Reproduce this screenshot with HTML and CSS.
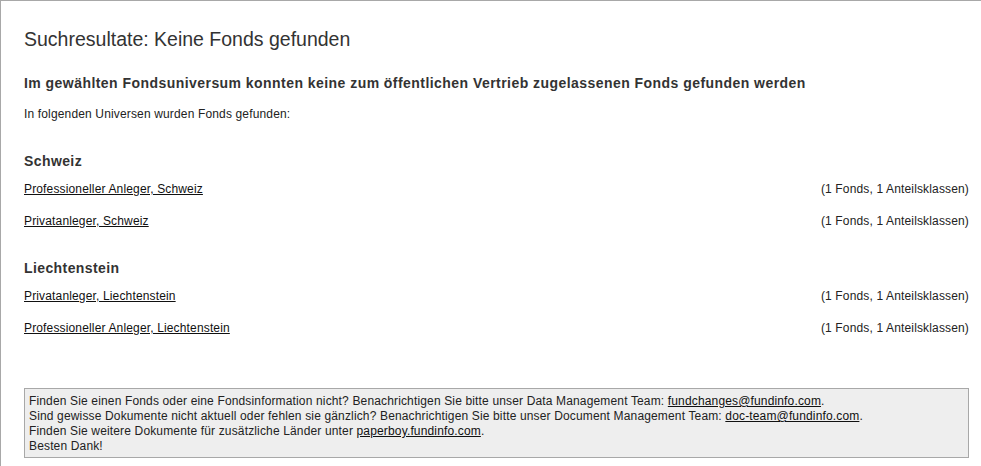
FILE: index.html
```html
<!DOCTYPE html>
<html lang="de">
<head>
  <meta charset="UTF-8">
  <title>Suchresultate</title>
  <link rel="stylesheet" href="styles.css">
</head>
<body>
  <div class="page">
    <h1 class="title">Suchresultate: Keine Fonds gefunden</h1>
    <h2 class="notice">Im gewählten Fondsuniversum konnten keine zum öffentlichen Vertrieb zugelassenen Fonds gefunden werden</h2>
    <p class="intro">In folgenden Universen wurden Fonds gefunden:</p>

    <div class="country">
      <h3>Schweiz</h3>
      <div class="row">
        <a href="#">Professioneller Anleger, Schweiz</a>
        <span>(1 Fonds, 1 Anteilsklassen)</span>
      </div>
      <div class="row">
        <a href="#">Privatanleger, Schweiz</a>
        <span>(1 Fonds, 1 Anteilsklassen)</span>
      </div>
    </div>

    <div class="country">
      <h3>Liechtenstein</h3>
      <div class="row">
        <a href="#">Privatanleger, Liechtenstein</a>
        <span>(1 Fonds, 1 Anteilsklassen)</span>
      </div>
      <div class="row">
        <a href="#">Professioneller Anleger, Liechtenstein</a>
        <span>(1 Fonds, 1 Anteilsklassen)</span>
      </div>
    </div>

    <div class="info">
      Finden Sie einen Fonds oder eine Fondsinformation nicht? Benachrichtigen Sie bitte unser Data Management Team: <a href="#">fundchanges@fundinfo.com</a>.<br>
      Sind gewisse Dokumente nicht aktuell oder fehlen sie gänzlich? Benachrichtigen Sie bitte unser Document Management Team: <a href="#">doc-team@fundinfo.com</a>.<br>
      Finden Sie weitere Dokumente für zusätzliche Länder unter <a href="#">paperboy.fundinfo.com</a>.<br>
      Besten Dank!
    </div>
  </div>
</body>
</html>
```

FILE: styles.css
```css
body {
  margin: 0;
  font-family: Arial, "Liberation Sans", sans-serif;
  font-size: 12px;
  letter-spacing: 0.15px;
  color: #222;
  background: #fff;
}

.page {
  border-top: 1px solid #a8a8a8;
  border-left: 1px solid #a8a8a8;
  padding: 27px 12px 8px 23px;
  min-height: 420px;
}

a {
  color: #111;
  text-decoration: underline;
}

.title {
  margin: 0;
  font-size: 19.5px;
  font-weight: normal;
  letter-spacing: 0;
  line-height: 23px;
  color: #333;
}

.notice {
  margin: 24px 0 0;
  font-size: 14px;
  letter-spacing: 0.45px;
  line-height: 17px;
  color: #333;
}

.intro {
  margin: 15px 0 0;
  line-height: 14px;
}

.country {
  margin-top: 32px;
}

.country h3 {
  margin: 0;
  font-size: 14px;
  letter-spacing: 0.4px;
  line-height: 17px;
  color: #333;
}

.row {
  display: flex;
  justify-content: space-between;
  line-height: 14px;
  margin-top: 18px;
}

.country h3 + .row {
  margin-top: 12px;
}

.info {
  margin-top: 53px;
  background: #eee;
  border: 1px solid #a8a8a8;
  padding: 5px 5px 3px 4px;
  line-height: 15px;
}
```
